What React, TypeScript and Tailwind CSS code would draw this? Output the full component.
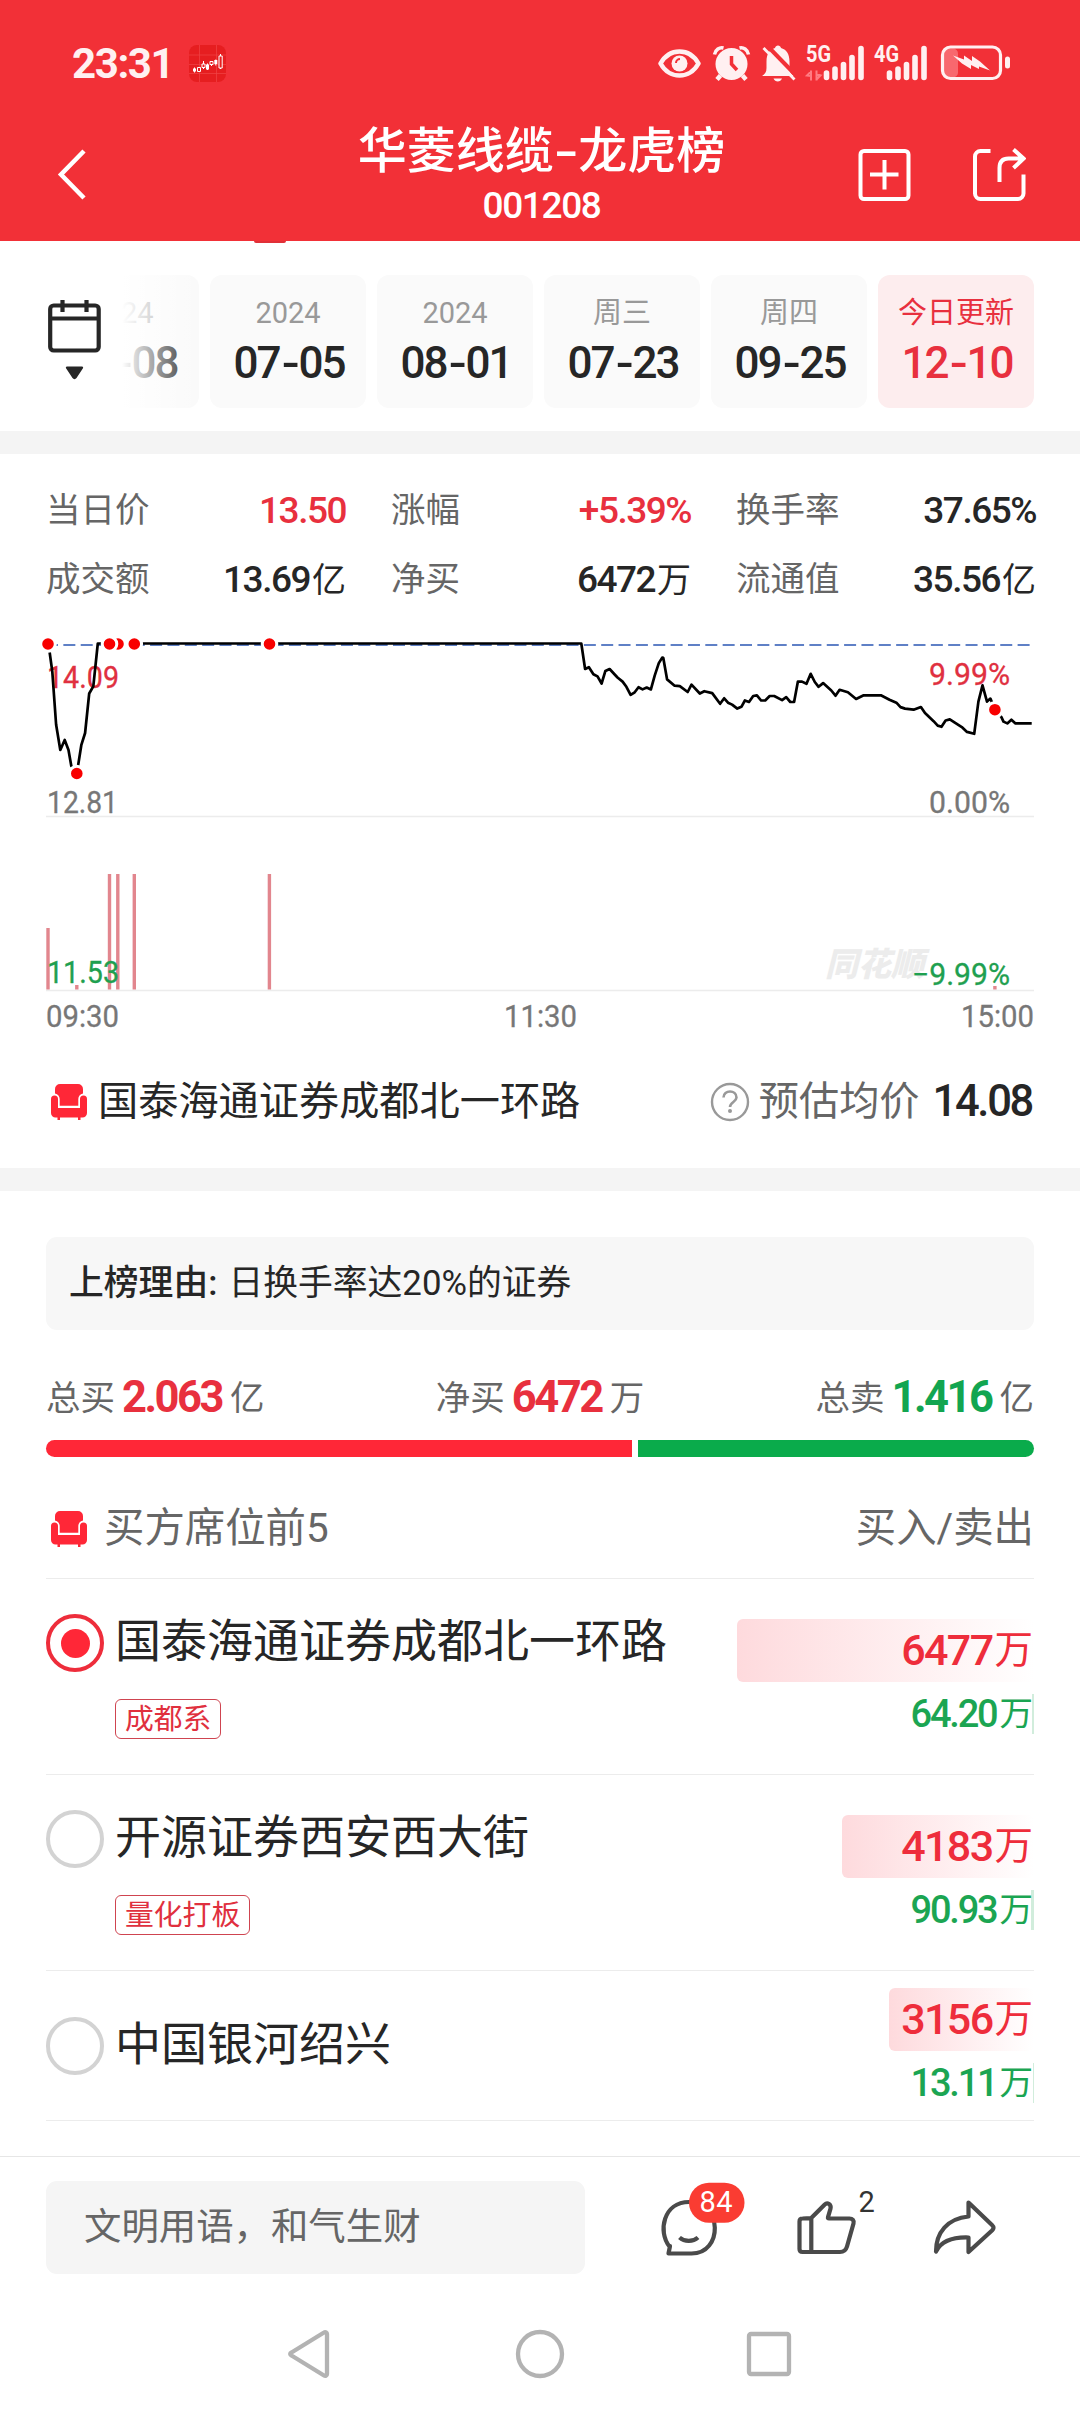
import type { ReactNode } from 'react';

const dates = [
  { label: '2024', date: '05-08' },
  { label: '2024', date: '07-05' },
  { label: '2024', date: '08-01' },
  { label: '周三', date: '07-23' },
  { label: '周四', date: '09-25' },
  { label: '今日更新', date: '12-10', active: true },
];

const stats = [
  { label: '当日价', value: '13.50', color: 'text-[#e8303e]' },
  { label: '涨幅', value: '+5.39%', color: 'text-[#e8303e]' },
  { label: '换手率', value: '37.65%', color: 'text-[#262626]' },
  { label: '成交额', value: '13.69', unit: '亿', color: 'text-[#262626]' },
  { label: '净买', value: '6472', unit: '万', color: 'text-[#262626]' },
  { label: '流通值', value: '35.56', unit: '亿', color: 'text-[#262626]' },
];

const seats = [
  { name: '国泰海通证券成都北一环路', tag: '成都系', buy: '6477', sell: '64.20', buyWidth: 297, sellWidth: 2, height: 'h-[196px]', selected: true },
  { name: '开源证券西安西大街', tag: '量化打板', buy: '4183', sell: '90.93', buyWidth: 192, sellWidth: 3, height: 'h-[196px]' },
  { name: '中国银河绍兴', tag: '', buy: '3156', sell: '13.11', buyWidth: 145, sellWidth: 1, height: 'h-[150px]' },
];

const pricePoints =
  '48,644 49.6,652 52.3,671.6 56.1,724.5 60.3,750 64.7,740 68.5,750 71.3,766 76.8,773.4 78.2,764.9 81.3,745.2 85.1,733 89.2,693.5 93.3,686.4 97.8,643.5 581.3,643.5 585.1,669 588.9,667.2 593.4,674.2 597.5,676.4 601.6,683.5 605.4,670.9 609.6,669 617.5,677.5 622.6,681.6 626.4,686.8 630.6,694.9 634.7,692.3 638.5,687.2 642.6,689.4 646.7,687.5 650.9,689.4 654.7,675.7 658.8,663.1 662.2,657.6 663.3,657.9 667.1,679.4 674.6,685.7 679.8,686.1 687.7,692 691.5,684.6 699.8,693.5 704.3,691.2 712.2,693.1 720.1,703.8 724.2,698.3 728,702.7 732.1,704.6 737.3,708.6 741.4,706.8 744.9,700.5 749,702 753.2,696 756.9,695.3 761.1,700.5 765.2,700.5 769.7,696 774.2,696 782.1,700.1 786.2,697.2 790.3,702 794.1,702 797.9,681.6 802,681.6 806.5,683.8 810.7,673.8 814.8,682 818.6,686.8 823.1,683.1 831.3,690.5 835.5,695.7 839.6,689.8 847.9,692.3 856.1,699 863.7,695.3 880.9,695.3 889.5,699.7 896.4,702.7 900.5,707.1 905,708.6 913.6,709.7 920.9,707.1 925,713.1 933.6,721.2 937.7,725.6 941.5,726.8 945.6,720.5 949.8,719.4 961.8,727.1 967,731.9 974.2,733.8 978.4,701.6 982.5,685.3 987,701.6 990.4,698.6 994.9,709.7 1001.4,717.1 1003.5,721.6 1007.3,723.4 1011.4,719.7 1015.5,723.4 1031.7,723.4';

const tradeDots = [
  [48, 644],
  [118, 644],
  [109.5, 644],
  [134.3, 644],
  [269.5, 644],
  [76.8, 773.5],
  [994.9, 709.7],
];

const volumeBars = [
  [48, 928],
  [109.5, 874],
  [117.8, 874],
  [134.3, 874],
  [269.4, 874],
  [76.8, 985],
  [994.9, 986],
];

function StatusBar() {
  return (
    <div className="flex h-[82px] items-end justify-between pl-[72px] pr-[69px] text-[#fff0f1]">
      <div className="flex h-[37px] items-center gap-[16px]">
        <span className="text-[42px] leading-none font-bold tracking-[-1.400px]">23:31</span>
        <svg width="37" height="37" viewBox="0 0 37 37">
          <rect width="37" height="37" rx="8" fill="#e61e20" />
          <path d="M10.5 0v37M27.5 0v37M0 10h37M0 19.5h37M0 28.5h37" stroke="#ef4446" strokeWidth="0.7" />
          <path d="M5.5 22.5v5M14.5 16v8M18.5 18.5v6.5M22.5 16v5M26.8 14.5v6M31.5 9v15" stroke="#fff" strokeWidth="1" />
          <path d="M4 23.5h3v3H4zM17 19.5h3v5h-3zM25.300 15h3v4h-3z" fill="#fff" />
          <path d="M8.500 22.500h3v4h-3zM13 19h3v3.500h-3zM21 16.500h3v3h-3zM30 11h3.200v12h-3.200z" fill="#e61e20" stroke="#fff" strokeWidth="1" />
        </svg>
      </div>
      <svg width="353" height="43" viewBox="658 39.500 353 43" fill="none">
        <path d="M660.500 64c9-16 29-16 38 0c-9 16-29 16-38 0z" stroke="currentColor" strokeWidth="4.500" strokeLinejoin="round" />
        <circle cx="679.500" cy="64" r="8" fill="currentColor" />
        <path d="M676 63.500a4 4 0 0 1 4-4" stroke="#f23037" strokeWidth="2" />
        <circle cx="731.500" cy="64.500" r="16" fill="currentColor" />
        <path d="M720.500 76l-3.500 4M742.500 76l3.500 4" stroke="currentColor" strokeWidth="4.500" />
        <path d="M714.500 55c1-5 5-7.500 9-6.500M748.500 55c-1-5-5-7.500-9-6.500" stroke="currentColor" strokeWidth="3.500" />
        <path d="M731.500 56.500v8l5.500 6" stroke="#f23037" strokeWidth="3.500" />
        <path d="M762 76.500c3-2 4.500-4 4.500-8V62c0-8 3.500-12 8.500-13.500c.5-3.500 5.500-3.500 6 0c5 1.500 8.500 5.500 8.500 13.500v6.500c0 4 1.500 6 4.500 8zM773.500 79h8.500c-1.500 4-7 4-8.500 0z" fill="currentColor" />
        <path d="M766 45l33 34" stroke="#f23037" strokeWidth="4" />
        <path d="M763.500 48.500l31 31.500" stroke="currentColor" strokeWidth="2.800" />
        <text x="806" y="62.500" fontSize="23" fontWeight="700" textLength="25" lengthAdjust="spacingAndGlyphs" fill="currentColor">5G</text>
        <path d="M811 71v10M816.500 71v10M807 76.500h4l-4-.5 4-4M820.500 75.500h-4l4 .5-4 4" stroke="#ff7b82" strokeWidth="2" />
        <path d="M826.500 73.500V78M835 69.500V78M843.500 65V78M852 58V78M861 49V78" stroke="currentColor" strokeWidth="5.600" strokeLinecap="round" />
        <text x="874" y="62.500" fontSize="23" fontWeight="700" textLength="25" lengthAdjust="spacingAndGlyphs" fill="currentColor">4G</text>
        <path d="M889.500 73.500V78M898 69.500V78M906.500 65V78M915 58V78M924 49V78" stroke="currentColor" strokeWidth="5.600" strokeLinecap="round" />
        <rect x="944" y="49" width="14" height="29" rx="5" fill="#f8686e" />
        <rect x="942.500" y="47.500" width="58" height="31.500" rx="8" stroke="currentColor" strokeWidth="3.200" />
        <rect x="1005" y="57" width="5" height="12" rx="2.500" fill="currentColor" />
        <path d="M953 56l11 4 0-4 8 5.500v-5l8 5.500 10 9-11-4v2.500l-8-4v4l-9-5.500z" fill="currentColor" />
      </svg>
    </div>
  );
}

function Header() {
  return (
    <header className="h-[241px] bg-[#f23037] text-white">
      <StatusBar />
      <div className="mt-[42px] flex h-[106px] items-start justify-between pl-[57px] pr-[54px]">
        <svg className="mt-[24px] mr-[138px]" width="30" height="53" viewBox="0 0 30 53" fill="none">
          <path d="M27 3L4 26.500L27 50" stroke="#fff" strokeWidth="4.500" />
        </svg>
        <div className="flex flex-col items-center">
          <h1 className="flex text-[49px] leading-[56px] font-medium">
            <span>华菱线缆</span>
            <span className="inline-block scale-x-[1.45] px-[4px]">-</span>
            <span>龙虎榜</span>
          </h1>
          <span className="mt-[8px] text-[37px] leading-[36px] font-medium tracking-[-1.400px]">001208</span>
        </div>
        <svg className="mt-[24px]" width="168" height="53" viewBox="858 148 168 53" fill="none" stroke="#fff" strokeWidth="4">
          <rect x="860.500" y="151" width="48" height="48" rx="3.500" />
          <path d="M884.500 160v29.500M870 174.500h28.500" />
          <path d="M990.500 151h-10a5.500 5.500 0 0 0-5.500 5.500v37a5.500 5.500 0 0 0 5.500 5.500h37.500a5.500 5.500 0 0 0 5.500-5.500V174.500" />
          <path d="M999.500 182v-14c0-6 3-9.500 9-9.500h15M1013.500 149.500l10 9l-10 9.500" />
        </svg>
      </div>
    </header>
  );
}

function DatePicker() {
  return (
    <section className="relative h-[190px] overflow-hidden">
      <div className="mt-[34px] ml-[43px] flex gap-[11px]">
        {dates.map((d) => (
          <div
            key={d.date}
            className={`flex h-[133px] w-[156px] shrink-0 flex-col items-center rounded-[12px] pt-[22px] ${
              d.active ? 'bg-[#fdedee] text-[#e8303e]' : 'bg-[#fafafa] text-[#262626]'
            }`}
          >
            <span className={`text-[29px] leading-[32px] ${d.active ? '' : 'text-[#999]'}`}>{d.label}</span>
            <span className="mt-[12px] flex pl-[2px] text-[44px] leading-[44px] font-medium tracking-[-2px]">
              {d.date.slice(0, 2)}
              <span className="inline-block scale-x-[1.200] px-[3px]">-</span>
              {d.date.slice(3)}
            </span>
          </div>
        ))}
      </div>
      <div className="absolute top-0 left-0 flex h-[180px] w-[122px] justify-end bg-white">
        <svg className="mt-[58px] mr-[20px]" width="56" height="84" viewBox="46 299 56 84" fill="none">
          <rect x="50.200" y="305.500" width="48.500" height="45" rx="3.500" stroke="#262626" strokeWidth="4.200" />
          <path d="M50 318.500h49M62.500 300v12M86.500 300v12" stroke="#262626" strokeWidth="4.200" />
          <path d="M67 366.500h15c1.200 0 1.500 1 .8 2l-6.300 9.500c-1 1.500-3 1.500-4 0l-6.300-9.500c-.7-1-.4-2 .8-2z" fill="#262626" />
        </svg>
      </div>
      <div className="absolute top-0 left-[122px] h-[180px] w-[77px] bg-linear-to-r from-white to-white/0" />
      <div className="absolute top-0 left-[254px] h-[2px] w-[32px] rounded-b-[2px] bg-[#e03038]" />
    </section>
  );
}

function SofaIcon() {
  return (
    <svg className="shrink-0" width="36" height="36" viewBox="0 0 36 36" fill="#ff2737">
      <path d="M9 0h18a5 5 0 0 1 5 5v4.500c-3 .5-4.700 3-4.700 5.500v6.800H8.700V15c0-2.500-1.700-5-4.700-5.500V5a5 5 0 0 1 5-5z" />
      <path d="M3.500 11.500A3.500 3.500 0 0 1 7 15v9h22v-9a3.500 3.500 0 0 1 7 0v14a4.500 4.500 0 0 1-4.500 4.500h-27A4.500 4.500 0 0 1 0 29V15a3.500 3.500 0 0 1 3.500-3.500z" />
      <path d="M6.500 33h2.500v3H6.500zM27 33h2.500v3H27z" />
    </svg>
  );
}

function ChartText({ x, y, length, color, children }: { x: number; y: number; length: number; color: string; children: ReactNode }) {
  return (
    <text x={x} y={y} textLength={length} lengthAdjust="spacingAndGlyphs" fontSize="30.500" fill={color} stroke={color} strokeWidth="0.3">
      {children}
    </text>
  );
}

function PriceChart() {
  return (
    <svg className="ml-[38px]" width="1004" height="406" viewBox="38 634 1004 406" fill="none">
      <text x="825" y="976" fontSize="33" fontWeight="900" fontStyle="italic" fill="#ececec">同花顺</text>
      <path d="M46 816.500h988M46 990.500h988" stroke="#ececec" strokeWidth="1.300" />
      <path d="M46 645h988" stroke="#5f80c6" strokeWidth="2" strokeDasharray="12 5.350" />
      {volumeBars.map(([x, top]) => (
        <rect key={x} x={x - 1.700} y={top} width="3.400" height={989.500 - top} fill="#e2868e" />
      ))}
      <ChartText x={47} y={687.500} length={72} color="#e03040">14.09</ChartText>
      <ChartText x={929} y={684.500} length={81} color="#e03040">9.99%</ChartText>
      <ChartText x={47} y={813.200} length={71} color="#777">12.81</ChartText>
      <ChartText x={929} y={813.200} length={81} color="#777">0.00%</ChartText>
      <ChartText x={47} y={982.500} length={72} color="#1fa050">11.53</ChartText>
      <ChartText x={912} y={985} length={98} color="#1fa050">−9.99%</ChartText>
      <polyline points={pricePoints} stroke="#000" strokeWidth="2.700" strokeLinejoin="round" />
      {tradeDots.map(([x, y]) => (
        <circle key={x} cx={x} cy={y} r="7.300" fill="#f80000" stroke="#fff" strokeWidth="3" />
      ))}
      <ChartText x={46} y={1026.500} length={73} color="#777">09:30</ChartText>
      <ChartText x={504} y={1026.500} length={73} color="#777">11:30</ChartText>
      <ChartText x={961} y={1026.500} length={73} color="#777">15:00</ChartText>
    </svg>
  );
}

function DaySummary() {
  return (
    <section className="h-[714px] overflow-hidden">
      <div className="mt-[22px] grid grid-cols-3 gap-x-[45px] pl-[46px] pr-[44px]">
        {stats.map((s) => (
          <div key={s.label} className="flex h-[69px] items-center justify-between">
            <span className="text-[34.500px] leading-none text-[#666]">{s.label}</span>
            <span className={`flex items-center leading-none ${s.color}`}>
              <span className="text-[37px] font-medium tracking-[-1.500px]">{s.value}</span>
              {s.unit && <span className="ml-[2px] text-[34px]">{s.unit}</span>}
            </span>
          </div>
        ))}
      </div>
      <div className="mt-[20px] h-[406px]">
        <PriceChart />
      </div>
      <div className="mt-[40px] flex h-[44px] items-center pl-[51px] pr-[48px] text-[40.200px] leading-none">
        <SofaIcon />
        <span className="ml-[11px] text-[#262626]">国泰海通证券成都北一环路</span>
        <svg className="ml-auto" width="40" height="40" viewBox="0 0 40 40" fill="none">
          <circle cx="20" cy="20" r="18" stroke="#999" strokeWidth="2.400" />
          <path d="M13.500 15.500c0-8 13-8 13 0c0 4.500-6.500 4.500-6.500 9.500" stroke="#999" strokeWidth="2.600" />
          <circle cx="20" cy="29" r="2" fill="#999" />
        </svg>
        <span className="ml-[9px] text-[#666]">预估均价</span>
        <span className="ml-[13px] text-[43.500px] font-medium tracking-[-2.300px] text-[#262626]">14.08</span>
      </div>
    </section>
  );
}

function Total({ label, value, unit, color }: { label: string; value: string; unit: string; color: string }) {
  return (
    <div className="flex items-center text-[34.500px] leading-none text-[#666]">
      <span>{label}</span>
      <span className={`mr-[8px] ml-[7px] text-[43.500px] font-bold tracking-[-2.500px] ${color}`}>{value}</span>
      <span>{unit}</span>
    </div>
  );
}

function BoardDetail() {
  return (
    <section className="h-[965px] overflow-hidden px-[46px]">
      <div className="mt-[46px] flex h-[93px] items-center rounded-[11px] bg-[#f7f7f7] px-[23px] text-[34.800px] leading-none text-[#262626]">
        <span className="font-medium">上榜理由:</span>
        <span className="ml-[11px]">日换手率达20%的证券</span>
      </div>
      <div className="mt-[44px] flex h-[48px] items-center justify-between">
        <Total label="总买" value="2.063" unit="亿" color="text-[#e8303e]" />
        <Total label="净买" value="6472" unit="万" color="text-[#e8303e]" />
        <Total label="总卖" value="1.416" unit="亿" color="text-[#12a550]" />
      </div>
      <div className="mt-[18px] flex h-[17px] gap-[6px]">
        <div className="w-[586px] rounded-l-full bg-[#ff2737]" />
        <div className="flex-1 rounded-r-full bg-[#0aab4b]" />
      </div>
      <div className="mt-[50px] flex h-[44px] items-center pl-[5px] text-[40.400px] leading-none text-[#666]">
        <SofaIcon />
        <span className="ml-[17px]">买方席位前5</span>
        <span className="ml-auto">买入/卖出</span>
      </div>
      <ul className="mt-[27px] border-t border-[#ececec]">
        {seats.map((s) => (
          <li key={s.name} className={`flex items-center justify-between border-b border-[#ececec] ${s.height}`}>
            <div>
              <div className="flex h-[58px] items-center">
                <span
                  className={`flex size-[58px] items-center justify-center rounded-full border-[4px] ${
                    s.selected ? 'border-[#ee2d3b]' : 'border-[#d3d3d3]'
                  }`}
                >
                  {s.selected && <span className="size-[29px] rounded-full bg-[#ff2737]" />}
                </span>
                <span className="mb-[4px] ml-[11px] text-[46px] leading-none text-[#262626]">{s.name}</span>
              </div>
              {s.tag && (
                <span className="mt-[27px] ml-[69px] flex h-[40px] w-fit items-center rounded-[6px] border border-[#cf4450] px-[9px] text-[28.800px] leading-none text-[#e0303e]">
                  {s.tag}
                </span>
              )}
            </div>
            <div className="relative flex flex-col items-end">
              <div
                className="flex h-[63px] items-center justify-end rounded-[6px] bg-linear-to-r from-[#fedadd] to-[#fedadd]/0 pr-[1px] leading-none text-[#ee2d3b]"
                style={{ width: s.buyWidth }}
              >
                <span className="text-[43px] font-medium tracking-[-1.600px]">{s.buy}</span>
                <span className="ml-[2px] text-[38.500px]">万</span>
              </div>
              <div className="mt-[12px] flex h-[40px] items-center justify-end pr-[1px] leading-none text-[#1ba552]">
                <span className="text-[38px] font-medium tracking-[-2.200px]">{s.sell}</span>
                <span className="ml-[3px] text-[33.500px]">万</span>
              </div>
              <div className="absolute right-0 bottom-0 h-[40px] bg-[#1ba552]/20" style={{ width: s.sellWidth }} />
            </div>
          </li>
        ))}
      </ul>
    </section>
  );
}

function CommentBar() {
  return (
    <div className="flex h-[140px] items-start border-t border-[#e6e6e6] pt-[24px] pl-[46px]">
      <div className="flex h-[93px] w-[539px] items-center rounded-[11px] bg-[#f5f5f5] pl-[38px] text-[37.400px] leading-none text-[#666]">
        文明用语，和气生财
      </div>
      <svg className="ml-[73px]" width="345" height="84" viewBox="658 2181 345 84" fill="none" stroke="#4a4a4a" strokeWidth="4.200" strokeLinejoin="round">
        <path d="M669.500 2246.500c-12-15-6-44.500 19.500-44.500c34 0 34 51.500 2.500 51.500H668.500l1.500-7.500z" />
        <path d="M679.500 2237.500c5 4.500 13.500 4.500 18.500 0" />
        <rect x="689" y="2182.700" width="55.500" height="40" rx="20" fill="#fa3c32" stroke="none" />
        <text x="699.500" y="2212.200" fontSize="29" textLength="33" fill="#fff" stroke="none">84</text>
        <path d="M811 2218.200l13.500-13.500c3-3 7 0 6 4l-2.500 8.500c-.3 1 0 1.300 1 1.300h20.500c3 0 4.800 2 4 5l-6.500 23c-1 3.500-3.500 5.500-7 5.500h-37.500c-2 0-3-1-3-3v-27.500c0-2 1-3 3-3zM811.300 2218.200v33.500" />
        <text x="858.500" y="2212" fontSize="29" fill="#333" stroke="none">2</text>
        <path d="M968.500 2202.500l23.500 22.500c2 2 2 3.500 0 5.500l-23.500 21.500v-14.500c-16-.5-27 3-32.500 14c0-19 11.500-33 32.500-35z" />
      </svg>
    </div>
  );
}

function NavBar() {
  return (
    <nav className="flex h-[116px] justify-center">
      <svg className="mt-[32px]" width="510" height="52" viewBox="285 2328 510 52" fill="none" stroke="#b3b3b3" strokeWidth="4.300" strokeLinejoin="round">
        <path d="M324 2332.500c1.500-1 3 0 3 1.500v40c0 1.500-1.500 2.500-3 1.500l-32.500-20c-1.800-1-1.800-2 0-3z" />
        <circle cx="540" cy="2354" r="22" />
        <rect x="749" y="2334" width="40" height="40" rx="2" />
      </svg>
    </nav>
  );
}

export default function App() {
  return (
    <div className="h-[2412px] w-[1080px] overflow-hidden bg-white font-['Roboto','Noto_Sans_CJK_SC',sans-serif]">
      <Header />
      <DatePicker />
      <div className="h-[23px] bg-[#f4f4f4]" />
      <DaySummary />
      <div className="h-[23px] bg-[#f4f4f4]" />
      <BoardDetail />
      <CommentBar />
      <NavBar />
    </div>
  );
}
